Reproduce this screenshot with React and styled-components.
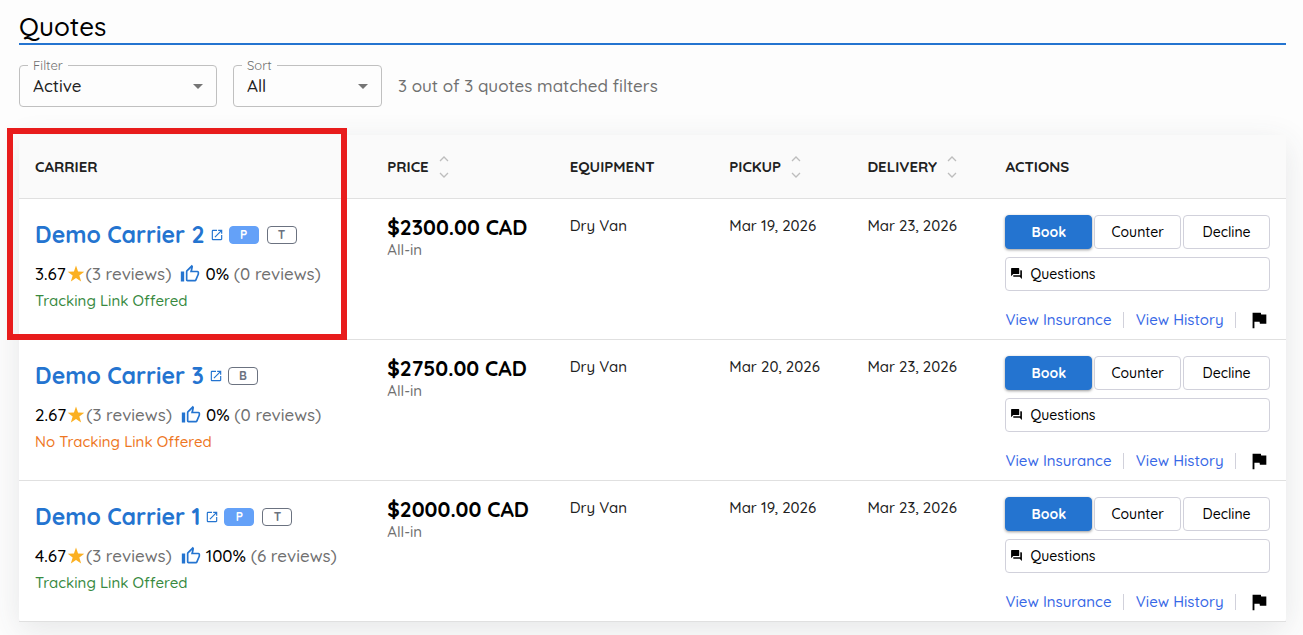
import React from "react";
import styled, { createGlobalStyle } from "styled-components";
import {
  MdArrowDropDown,
  MdFlag,
  MdOpenInNew,
  MdOutlineThumbUp,
  MdQuestionAnswer,
} from "react-icons/md";

const GlobalStyle = createGlobalStyle`
  *, *::before, *::after {
    box-sizing: border-box;
  }

  body {
    margin: 0;
    background-color: #fdfdfd;
    color: #000;
    font-family: Quicksand, Lato, "Open Sans", sans-serif;
    font-size: 16px;
    font-weight: 500;
  }

  button, select {
    font-family: inherit;
    font-weight: inherit;
  }
`;

const Page = styled.main`
  padding: 11px 17px 14px 19px;
  overflow: hidden;
`;

const Title = styled.h1`
  margin: 0;
  border-bottom: 2px solid #2474d0;
  font-size: 26px;
  font-weight: 500;
  line-height: 32px;
`;

const Toolbar = styled.div`
  display: flex;
  align-items: flex-end;
  gap: 16px;
  margin: 13px 0 28px;
`;

const Field = styled.fieldset`
  position: relative;
  width: ${({ $width }) => $width}px;
  height: 49px;
  margin: 0;
  padding: 0;
  border: 1px solid #c0c0c0;
  border-radius: 4px;
`;

const Legend = styled.legend`
  margin-left: 8px;
  padding: 0 5px;
  color: #6f6f6f;
  font-size: 13px;
  font-weight: 400;
  line-height: 14px;
`;

const Select = styled.select`
  display: block;
  width: 100%;
  height: 27px;
  padding: 0 32px 0 13px;
  border: 0;
  background: transparent;
  color: #212121;
  font-size: 17px;
  line-height: 24px;
  appearance: none;
`;

const Arrow = styled(MdArrowDropDown)`
  position: absolute;
  right: 6px;
  bottom: 8px;
  color: #757575;
  pointer-events: none;
`;

const Matches = styled.p`
  margin: 0;
  color: #707070;
  font-size: 17px;
  line-height: 42px;
`;

const Card = styled.section`
  position: relative;
  border-radius: 4px;
  background-color: #fff;
  box-shadow: 0 8px 32px rgba(60, 64, 70, 0.12);
`;

const Highlight = styled.div`
  position: absolute;
  top: -7px;
  left: -12px;
  width: calc(27.8% - 12px);
  height: 212px;
  border: 6px solid #e81c1c;
  pointer-events: none;
`;

const Table = styled.table`
  width: 100%;
  table-layout: fixed;
  border-collapse: separate;
  border-spacing: 0;
`;

const HeadCell = styled.th`
  width: ${({ $width }) => $width};
  height: 64px;
  padding: 0 16px;
  border-bottom: 1px solid #e0e0e0;
  background-color: #fafafa;
  color: #212121;
  font-size: 15px;
  font-weight: 700;
  text-align: left;
`;

const HeadLabel = styled.span`
  display: flex;
  align-items: center;
  gap: 10px;
`;

const SortButton = styled.button`
  display: flex;
  padding: 0;
  border: 0;
  background: none;
  color: #bdbdbd;
`;

const Cell = styled.td`
  padding: 16px 16px 7px;
  border-bottom: 1px solid #e0e0e0;
  color: #212121;
  font-size: 15px;
  line-height: 22px;
  vertical-align: top;
`;

const CarrierName = styled.div`
  display: flex;
  align-items: center;
  margin-top: 4px;
`;

const CarrierLink = styled.a`
  display: flex;
  align-items: center;
  gap: 5px;
  margin-right: 5px;
  color: #2474d0;
  font-size: 23px;
  font-weight: 700;
  line-height: 32px;
  text-decoration: none;
`;

const Badge = styled.span`
  width: 30px;
  margin-right: 8px;
  border: 1px solid ${({ $filled }) => ($filled ? "#64a1f8" : "#6b7280")};
  border-radius: 4px;
  background-color: ${({ $filled }) => ($filled ? "#64a1f8" : "#fff")};
  color: ${({ $filled }) => ($filled ? "#fff" : "#6b7280")};
  font-size: 12px;
  font-weight: 700;
  line-height: 16px;
  text-align: center;
`;

const Reviews = styled.div`
  display: flex;
  align-items: center;
  margin-top: 11px;
  color: #000;
  font-size: 17px;
  line-height: 24px;
  white-space: nowrap;
`;

const Count = styled.span`
  color: #707070;
`;

const Star = styled.svg`
  width: 20px;
  height: 20px;
  color: #fbb022;
`;

const Thumb = styled(MdOutlineThumbUp)`
  margin: 0 5px 0 9px;
  color: #2474d0;
`;

const Tracking = styled.div`
  margin-top: 4px;
  color: ${({ $offered }) => ($offered ? "#388a3f" : "#ee7623")};
  font-size: 15px;
`;

const Price = styled.div`
  color: #000;
  font-size: 21px;
  font-weight: 700;
  line-height: 25px;
`;

const PriceNote = styled.div`
  color: #707070;
  font-size: 15px;
  line-height: 20px;
`;

const Buttons = styled.div`
  display: grid;
  grid-template-columns: repeat(3, 1fr);
  gap: 8px 2px;
`;

const Button = styled.button`
  height: 34px;
  padding: 0 0 1px;
  border: 1px solid #d1d1db;
  border-radius: 4px;
  background-color: #fff;
  color: #000;
  font-size: 14px;
`;

const BookButton = styled(Button)`
  border-color: #2474d0;
  background-color: #2474d0;
  box-shadow: 0 1px 3px rgba(0, 0, 0, 0.4);
  color: #fff;
  font-weight: 700;
`;

const QuestionsButton = styled(Button)`
  display: flex;
  grid-column: 1 / -1;
  align-items: center;
  gap: 7px;
  padding: 0 4px 1px;
`;

const Links = styled.div`
  display: flex;
  align-items: center;
  justify-content: space-between;
  height: 24px;
  margin-top: 17px;
  white-space: nowrap;
`;

const ActionLink = styled.a`
  color: #3768e6;
  font-size: 15px;
  text-decoration: none;
`;

const Divider = styled.span`
  flex-shrink: 0;
  width: 1px;
  height: 16px;
  background-color: #d1d1db;
`;

const FlagButton = styled.button`
  display: flex;
  padding: 0;
  border: 0;
  background: none;
  color: #000;
`;

const columns = [
  { label: "CARRIER", width: "27.8%" },
  { label: "PRICE", width: "14.4%", sortable: true },
  { label: "EQUIPMENT", width: "12.6%" },
  { label: "PICKUP", width: "10.9%", sortable: true },
  { label: "DELIVERY", width: "10.9%", sortable: true },
  { label: "ACTIONS", width: "23.4%" },
];

const quotes = [
  {
    carrier: "Demo Carrier 2",
    badges: ["P", "T"],
    rating: "3.67",
    ratingCount: 3,
    likes: "0%",
    likesCount: 0,
    tracking: true,
    price: "$2300.00 CAD",
    pickup: "Mar 19, 2026",
    delivery: "Mar 23, 2026",
  },
  {
    carrier: "Demo Carrier 3",
    badges: ["B"],
    rating: "2.67",
    ratingCount: 3,
    likes: "0%",
    likesCount: 0,
    tracking: false,
    price: "$2750.00 CAD",
    pickup: "Mar 20, 2026",
    delivery: "Mar 23, 2026",
  },
  {
    carrier: "Demo Carrier 1",
    badges: ["P", "T"],
    rating: "4.67",
    ratingCount: 3,
    likes: "100%",
    likesCount: 6,
    tracking: true,
    price: "$2000.00 CAD",
    pickup: "Mar 19, 2026",
    delivery: "Mar 23, 2026",
  },
];

function SelectField({ id, label, value, width }) {
  return (
    <Field $width={width}>
      <Legend>
        <label htmlFor={id}>{label}</label>
      </Legend>
      <Select id={id} defaultValue={value}>
        <option>{value}</option>
      </Select>
      <Arrow size={24} />
    </Field>
  );
}

function StarIcon() {
  return (
    <Star viewBox="0 0 20 20" fill="currentColor" aria-hidden="true">
      <path d="M10 1.6l2.06 5.97 6.22.17-4.95 3.84 1.82 6L10 14l-5.15 3.58 1.82-6L1.72 7.74l6.22-.17z" />
    </Star>
  );
}

function SortIcon() {
  return (
    <svg
      width="10"
      height="22"
      viewBox="0 0 10 22"
      fill="none"
      stroke="currentColor"
      strokeWidth="1.3"
    >
      <path d="M1 5l4-4 4 4M1 17l4 4 4-4" />
    </svg>
  );
}

function QuoteRow({ quote }) {
  return (
    <tr>
      <Cell>
        <CarrierName>
          <CarrierLink href="#">
            {quote.carrier}
            <MdOpenInNew size={14} />
          </CarrierLink>
          {quote.badges.map((badge) => (
            <Badge key={badge} $filled={badge === "P"}>
              {badge}
            </Badge>
          ))}
        </CarrierName>
        <Reviews>
          {quote.rating}
          <StarIcon />
          <Count>({quote.ratingCount} reviews)</Count>
          <Thumb size={20} />
          {quote.likes}
          <Count>&nbsp;({quote.likesCount} reviews)</Count>
        </Reviews>
        <Tracking $offered={quote.tracking}>
          {quote.tracking ? "Tracking Link Offered" : "No Tracking Link Offered"}
        </Tracking>
      </Cell>
      <Cell>
        <Price>{quote.price}</Price>
        <PriceNote>All-in</PriceNote>
      </Cell>
      <Cell>Dry Van</Cell>
      <Cell>{quote.pickup}</Cell>
      <Cell>{quote.delivery}</Cell>
      <Cell>
        <Buttons>
          <BookButton type="button">Book</BookButton>
          <Button type="button">Counter</Button>
          <Button type="button">Decline</Button>
          <QuestionsButton type="button">
            <MdQuestionAnswer size={13} />
            Questions
          </QuestionsButton>
        </Buttons>
        <Links>
          <ActionLink href="#">View Insurance</ActionLink>
          <Divider />
          <ActionLink href="#">View History</ActionLink>
          <Divider />
          <FlagButton type="button" aria-label="Flag">
            <MdFlag size={22} />
          </FlagButton>
        </Links>
      </Cell>
    </tr>
  );
}

function App() {
  return (
    <Page>
      <GlobalStyle />
      <Title>Quotes</Title>
      <Toolbar>
        <SelectField id="filter" label="Filter" value="Active" width={198} />
        <SelectField id="sort" label="Sort" value="All" width={149} />
        <Matches>3 out of 3 quotes matched filters</Matches>
      </Toolbar>
      <Card>
        <Table>
          <thead>
            <tr>
              {columns.map(({ label, width, sortable }) => (
                <HeadCell key={label} $width={width}>
                  <HeadLabel>
                    {label}
                    {sortable && (
                      <SortButton type="button" aria-label={`Sort ${label}`}>
                        <SortIcon />
                      </SortButton>
                    )}
                  </HeadLabel>
                </HeadCell>
              ))}
            </tr>
          </thead>
          <tbody>
            {quotes.map((quote) => (
              <QuoteRow key={quote.carrier} quote={quote} />
            ))}
          </tbody>
        </Table>
        <Highlight />
      </Card>
    </Page>
  );
}

export default App;
